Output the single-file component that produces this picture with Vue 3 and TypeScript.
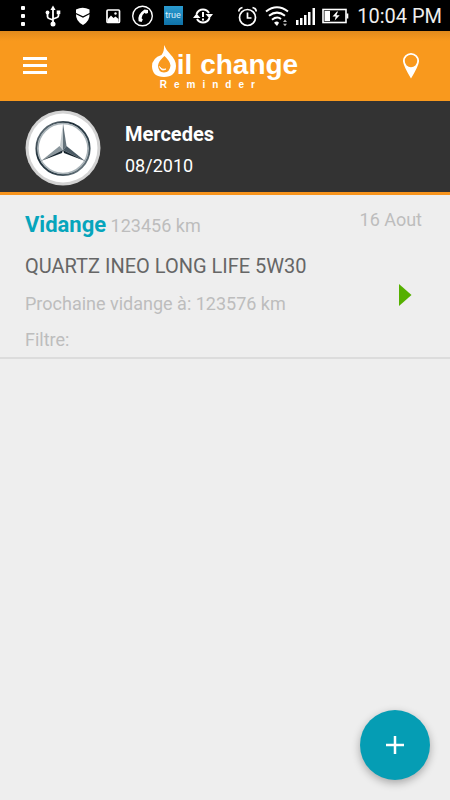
<script setup lang="ts">
interface OilChange {
  id: number
  title: string
  mileage: string
  date: string
  product: string
  next: string
  filter: string
}

const car = { name: 'Mercedes', date: '08/2010' }

const changes: OilChange[] = [
  {
    id: 1,
    title: 'Vidange',
    mileage: '123456 km',
    date: '16 Aout',
    product: 'QUARTZ INEO LONG LIFE 5W30',
    next: '123576 km',
    filter: '',
  },
]
</script>

<template>
  <div class="app">
    <div class="status">
      <div class="status-left">
        <svg viewBox="0 0 28 28" fill="#fff">
          <rect x="12" y="4" width="4" height="4" rx="1" /><rect x="12" y="12" width="4" height="4" rx="1" /><rect x="12" y="20" width="4" height="4" rx="1" />
        </svg>
        <svg viewBox="0 0 28 28" fill="none" stroke="#fff" stroke-width="1.8">
          <path d="M14 7v15M8.500 11v3.500q0 1.500 1.500 2l4 1.500M19.500 11v2.500q0 1.500-1.500 2L14 17" />
          <path d="M14 3.500l2.600 4.500h-5.200z" fill="#fff" stroke="none" />
          <circle cx="14" cy="22" r="2.500" fill="#fff" stroke="none" />
          <circle cx="8.500" cy="10.500" r="1.900" fill="#fff" stroke="none" />
          <rect x="17.700" y="8.500" width="3.600" height="3.600" fill="#fff" stroke="none" />
        </svg>
        <svg viewBox="0 0 28 28" fill="#fff">
          <path d="M7 7.500Q13.500 4 20.500 7.500V11L14 14.200 7 11z" />
          <path d="M7 12.300l7 3.400 6.500-3.400Q21 19 14 23 6.500 19 7 12.300z" />
        </svg>
        <svg viewBox="0 0 28 28">
          <rect x="8" y="8" width="12.500" height="12.500" rx="1" fill="none" stroke="#fff" stroke-width="1.700" />
          <path d="M9 17l3-3.500 2.500 2.500 2-1.500 3 2.500v3H9z" fill="#fff" /><circle cx="16.500" cy="11.500" r="1.200" fill="#fff" />
        </svg>
        <svg viewBox="0 0 28 28">
          <circle cx="13.500" cy="14" r="9.800" fill="none" stroke="#fff" stroke-width="1.400" />
          <path d="M15.500 7.500l3.500.5v3l-2.200.8-1.200-1q-3 2.200-3 5.400l1.200 1.300-1.200 2.500-3-.7Q8 12.500 15.500 7.500z" fill="#fff" />
        </svg>
        <span class="badge"><span class="badge-box">true</span></span>
        <svg viewBox="0 0 28 28" fill="none" stroke="#fff" stroke-width="2">
          <path d="M7.500 12Q9.500 7.500 14 7.500q4 0 6 3.500M20.500 16Q18.500 20.500 14 20.500q-4 0-6-3.500" />
          <path d="M16.500 12h7.500L20.500 16.500zM4 16h7.500L7.500 11.500z" fill="#fff" stroke="none" />
          <path d="M14 10v5M14 16.500v2" />
        </svg>
      </div>
      <div class="status-right">
        <svg viewBox="0 0 28 28" fill="none" stroke="#fff" stroke-width="1.700">
          <circle cx="13.500" cy="15.500" r="8" /><path d="M13.500 10.500v5.500h4M4.800 9.500q0-3 3.700-4M22.200 9.500q0-3-3.700-4" />
        </svg>
        <svg viewBox="0 0 28 28" fill="none" stroke="#fff" stroke-width="2">
          <path d="M3 9.500Q14 1 25 9.500M6 13.800Q14 7.500 22 13.800M9 17.800Q14 13.800 18 17" />
          <path d="M14 24l-3-3.300q3-2.200 5 0z" fill="#fff" stroke="none" />
          <path d="M20 20l2-2.500 2 2.500zM20 21.800l2 2.500 2-2.500z" fill="#bbb" stroke="none" />
        </svg>
        <svg viewBox="0 0 28 28" fill="#fff">
          <rect x="4" y="18" width="2.500" height="5" /><rect x="8" y="16" width="2.500" height="7" /><rect x="12" y="13" width="2.500" height="10" /><rect x="16" y="10" width="2.500" height="13" /><rect x="20.500" y="6" width="2.500" height="17" />
        </svg>
        <svg viewBox="0 0 28 28">
          <rect x="2" y="7.500" width="23" height="13" fill="none" stroke="#fff" stroke-width="1.600" />
          <rect x="25.500" y="11.500" width="1.800" height="5" fill="#fff" />
          <rect x="3.500" y="9" width="5.500" height="10" fill="#fff" />
          <path d="M16 9.500l-4.500 5h3.200l-1 4 5-5.300h-3.300l1.600-3.700z" fill="#fff" />
        </svg>
        <span class="clock">10:04 PM</span>
      </div>
    </div>

    <header class="toolbar">
      <button class="icon-btn" type="button" aria-label="Menu">
        <svg width="24" height="24" viewBox="0 0 24 24" fill="#fff">
          <rect y="3" width="24" height="3" /><rect y="10" width="24" height="3" /><rect y="17" width="24" height="3" />
        </svg>
      </button>
      <h1 class="logo">
        <span class="logo-main">
          <svg class="drop" width="25" height="33" viewBox="0 0 25 33">
            <path fill="#fff" fill-rule="evenodd" d="M12 0Q14 5 18.500 9.500Q24 15 24 21Q23.500 32 12 32Q.5 32 0 21.500Q0 13 9.500 10Q12.500 6 12 0zM12.500 11Q6.500 16 6 20.500Q6 27 12 27.500Q18 27 18.500 20.500Q18 16 12.500 11z" />
            <path fill="#fff" d="M7.500 21.500Q9.500 25 14 24Q9.500 27 7.500 21.500z" stroke="#fff" stroke-width=".8" />
          </svg>
          <span>il change</span>
        </span>
        <span class="logo-sub">Reminder</span>
      </h1>
      <button class="icon-btn end" type="button" aria-label="Location">
        <svg width="16" height="26" viewBox="0 0 16 26">
          <path fill="#fff" fill-rule="evenodd" d="M8 0a8 8 0 0 1 8 8.500Q15.500 13 8 25.500Q.5 13 0 8.500A8 8 0 0 1 8 0zM8 1.800A6.200 6.200 0 1 0 8 14.200A6.200 6.200 0 1 0 8 1.800z" />
        </svg>
      </button>
    </header>

    <section class="car">
      <svg class="emblem" width="76" height="76" viewBox="0 0 76 76">
        <defs>
          <linearGradient id="steel" x1="0" y1="0" x2="1" y2="1">
            <stop offset="0" stop-color="#7d8990" /><stop offset=".35" stop-color="#1e2e38" /><stop offset=".7" stop-color="#33444e" /><stop offset="1" stop-color="#8b979d" />
          </linearGradient>
        </defs>
        <circle cx="38" cy="38" r="37.500" fill="#d3d3d3" />
        <circle cx="38" cy="38" r="34.500" fill="#fff" />
        <circle cx="38" cy="38.500" r="26.500" fill="none" stroke="url(#steel)" stroke-width="2.200" />
        <circle cx="38" cy="38.500" r="25" fill="none" stroke="#a9b3b8" stroke-width="1.600" />
        <path d="M38 13l-3 23 3 4z" fill="#c3cacd" />
        <path d="M38 13l3.500 23-3.500 4z" fill="#65737b" />
        <path d="M38 40l-3.500-4L16 51z" fill="#8a969c" />
        <path d="M38 40l-1 3L16 51z" fill="#182731" />
        <path d="M38 40l3.500-4L60 51z" fill="#4a5a64" />
        <path d="M38 40l1 3L60 51z" fill="#14232c" />
      </svg>
      <div class="car-text">
        <h2 class="car-name">{{ car.name }}</h2>
        <p class="car-date">{{ car.date }}</p>
      </div>
    </section>

    <ul class="list">
      <li v-for="item in changes" :key="item.id" class="item">
        <div class="item-body">
          <p class="item-head"><strong class="item-title">{{ item.title }}</strong> {{ item.mileage }}</p>
          <p class="product">{{ item.product }}</p>
          <p>Prochaine vidange à: {{ item.next }}</p>
          <p>Filtre: {{ item.filter }}</p>
        </div>
        <div class="item-side">
          <span class="date">{{ item.date }}</span>
          <button class="open" type="button" aria-label="Ouvrir">
            <svg width="14" height="22" viewBox="0 0 14 22"><path d="M1 0v22l12.500-11z" fill="#55b000" /></svg>
          </button>
        </div>
      </li>
    </ul>

    <button class="fab" type="button" aria-label="Ajouter">
      <svg width="18" height="18" viewBox="0 0 18 18" fill="#fff"><path d="M8 0h2v8h8v2h-8v8H8v-8H0V8h8z" stroke="#fff" stroke-width=".5" /></svg>
    </button>
  </div>
</template>

<style>
body {
  margin: 0;
  background: #eee;
}
</style>

<style scoped>
.app {
  min-height: 100vh;
  background: #eee;
  font-family: Roboto, "Liberation Sans", sans-serif;
  color: #bdbdbd;
}
h1, h2, p, ul {
  margin: 0;
  padding: 0;
}
button {
  border: 0;
  padding: 0;
  background: none;
  cursor: pointer;
}
svg {
  display: block;
}
.status {
  display: flex;
  justify-content: space-between;
  align-items: center;
  height: 31px;
  padding: 0 8px 0 9px;
  background: #000;
}
.status svg {
  width: 28px;
  height: 28px;
}
.status-left, .status-right {
  display: flex;
  align-items: center;
}
.status-left {
  gap: 2px;
}
.status-right {
  gap: 1px;
}
.badge {
  display: flex;
  justify-content: center;
  width: 28px;
}
.badge-box {
  width: 19px;
  background: linear-gradient(#2b9bd0, #0f72a8);
  color: #d8eefa;
  font-size: 9px;
  line-height: 19px;
  text-align: center;
}
.clock {
  padding-left: 7px;
  color: #eee;
  font-size: 20px;
  line-height: 30px;
  white-space: nowrap;
}
.toolbar {
  display: grid;
  grid-template-columns: 1fr auto 1fr;
  align-items: center;
  height: 70px;
  padding: 0 31px 0 23px;
  background: linear-gradient(#e18a1c, #f9991d 10px);
}
.icon-btn {
  justify-self: start;
}
.icon-btn.end {
  justify-self: end;
}
.logo {
  display: flex;
  flex-direction: column;
  padding: 4px 0 0 8px;
  color: #fff;
  font-family: "Liberation Sans", Arial, sans-serif;
  font-weight: bold;
}
.logo-main {
  display: flex;
  align-items: flex-end;
  font-size: 28px;
  line-height: 26px;
}
.logo-sub {
  padding-left: 8px;
  font-size: 10px;
  line-height: 14px;
  letter-spacing: 7px;
}
.car {
  display: flex;
  align-items: center;
  gap: 24px;
  padding: 9px 25px 6px;
  background: #333;
  border-bottom: 3px solid #f7941d;
}
.car-text {
  padding-top: 4px;
  color: #fff;
}
.car-name {
  font-size: 20px;
  line-height: 32px;
}
.car-date {
  font-size: 18px;
  line-height: 32px;
}
.list {
  list-style: none;
}
.item {
  display: flex;
  justify-content: space-between;
  padding: 11px 28px 2px 25px;
  border-bottom: 2px solid #dcdcdc;
  font-size: 18px;
  line-height: 31px;
}
.item-body {
  display: flex;
  flex-direction: column;
  gap: 5px;
}
.item-head {
  line-height: 37px;
}
.item-title {
  color: #06a5bc;
  font-size: 22px;
}
.product {
  color: #666;
  font-size: 20px;
  line-height: 34px;
}
.item-side {
  display: flex;
  flex-direction: column;
  align-items: flex-end;
  gap: 50px;
}
.date {
  line-height: 28px;
}
.open {
  padding-right: 10px;
}
.fab {
  position: fixed;
  right: 20px;
  bottom: 20px;
  display: flex;
  align-items: center;
  justify-content: center;
  width: 70px;
  height: 70px;
  border-radius: 50%;
  background: #059db4;
  box-shadow: 0 3px 8px rgba(0, 0, 0, 0.3);
}
</style>
